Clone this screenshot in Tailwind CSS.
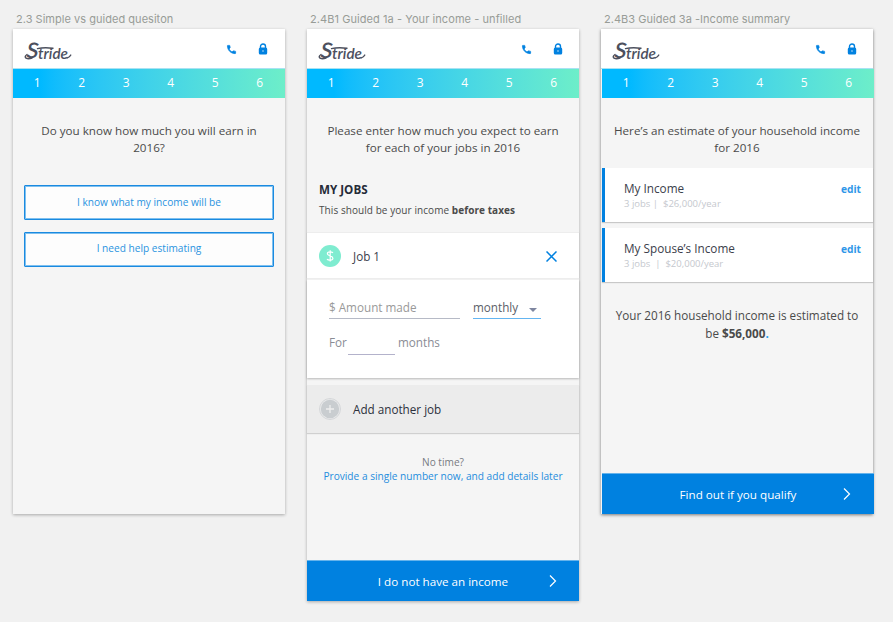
<!DOCTYPE html>
<html lang="en">
<head>
<meta charset="utf-8">
<title>Stride income flow</title>
<script src="https://cdn.jsdelivr.net/npm/@tailwindcss/browser@4"></script>
</head>
<body class="w-[893px] h-[622px] overflow-hidden bg-[#f1f1f1] font-['Open_Sans',sans-serif] text-[#4a4a4a]">
<svg class="hidden">
  <symbol id="phone" viewBox="0 0 24 24"><path fill="#0081e0" stroke="#0081e0" stroke-width="1.500" d="M6.600 10.800c1.500 2.800 3.800 5.100 6.600 6.600l2.200-2.200c.3-.3.7-.4 1-.2 1.100.4 2.300.6 3.600.6.600 0 1 .4 1 1V20c0 .6-.4 1-1 1C10.600 21 3 13.400 3 4c0-.6.4-1 1-1h3.500c.6 0 1 .4 1 1 0 1.200.2 2.400.6 3.600.1.300 0 .7-.2 1z"/></symbol>
  <symbol id="lock" viewBox="0 0 10 12"><path d="M2.500 5V3.500a2.500 2.500 0 0 1 5 0V5" fill="none" stroke="#0081e0" stroke-width="1.400"/><rect x="0.800" y="4.600" width="8.400" height="6.900" rx="1.500" fill="#0081e0"/><circle cx="5" cy="8" r="0.900" fill="#7fc0ef"/></symbol>
  <symbol id="logo" viewBox="0 0 48 22">
    <g font-family="Lato,sans-serif" font-style="italic" font-weight="600" fill="#4c505e"><text x="2.500" y="18" font-size="21.500" textLength="12" lengthAdjust="spacingAndGlyphs" transform="rotate(3 8 12)">S</text><text x="14" y="18.500" font-size="16" textLength="30" lengthAdjust="spacingAndGlyphs">tride</text></g>
    <path d="M13.500 8.600Q20 7 29 8.200M3 14.500Q0 16.500 2 18.200Q4.500 19.400 8 18M43 18Q45.500 17.500 46.800 15" fill="none" stroke="#4c505e" stroke-width="1.400" stroke-linecap="round"/>
  </symbol>
  <symbol id="chev" viewBox="0 0 8 14"><path d="M1 1.500L6.500 7L1 12.500" fill="none" stroke="#fff" stroke-width="1.200"/></symbol>
</svg>
<main class="flex items-start pl-[13px] pt-3">

  <section class="w-[272px] mr-[22px]">
    <h2 class="h-[17px] pl-[3px] leading-[15px] font-[Inter] text-[11px] text-[#989c97] whitespace-nowrap tracking-[0.03px]"><span>2.3 Simple vs guided quesiton</span></h2>
    <div class="h-[485px] bg-[#f5f5f5] shadow-[0_1px_3px_rgba(0,0,0,0.3)]">
      <header class="h-10 bg-white border-b border-[#a8e2f3] flex items-center">
        <svg class="w-12 h-[22px] ml-[11px] mt-1"><use href="#logo"/></svg>
        <svg class="w-[11px] h-[11px] ml-[154px] mt-px"><use href="#phone"/></svg>
        <svg class="w-[10px] h-3 ml-[21px] mt-px"><use href="#lock"/></svg>
      </header>
      <nav class="h-[29px] pl-0.5 pr-[3px] bg-linear-to-r from-[#00b9ff] from-10% to-[#6deec9] grid grid-cols-6 text-center text-[12px] leading-[28px] text-white"><b class="font-normal">1</b><b class="font-normal">2</b><b class="font-normal">3</b><b class="font-normal">4</b><b class="font-normal">5</b><b class="font-normal">6</b></nav>
      <p class="mt-6 text-center text-[11.650px] leading-[17px] whitespace-nowrap"><span>Do you know how much you will earn in</span><br>2016?</p>
      <div class="mt-[29px] mx-[11px] grid gap-[12px] text-center text-[10.150px] leading-[33px] text-[#2a93e0]">
        <div class="h-[35px] border-[1.500px] outline-1 -outline-offset-2 outline-[#7fc0ef] border-[#1a8ae0] rounded-[1px] bg-[#fdfdfd]"><span>I know what my income will be</span></div>
        <div class="h-[35px] border-[1.500px] outline-1 -outline-offset-2 outline-[#7fc0ef] border-[#1a8ae0] rounded-[1px] bg-[#fdfdfd] leading-[31px]"><span>I need help estimating</span></div>
      </div>
    </div>
  </section>

  <section class="w-[272px] mr-[22px]">
    <h2 class="h-[17px] pl-[3px] leading-[15px] font-[Inter] text-[11px] text-[#989c97] whitespace-nowrap tracking-[0.070px]"><span>2.4B1 Guided 1a - Your income - unfilled</span></h2>
    <div class="h-[572px] bg-[#f5f5f5] shadow-[0_1px_3px_rgba(0,0,0,0.3)] flex flex-col">
      <header class="h-10 bg-white border-b border-[#a8e2f3] flex items-center">
        <svg class="w-12 h-[22px] ml-[11px] mt-1"><use href="#logo"/></svg>
        <svg class="w-[11px] h-[11px] ml-[155px] mt-px"><use href="#phone"/></svg>
        <svg class="w-[10px] h-3 ml-[21px] mt-px"><use href="#lock"/></svg>
      </header>
      <nav class="h-[29px] pl-0.5 pr-[3px] bg-linear-to-r from-[#00b9ff] from-10% to-[#6deec9] grid grid-cols-6 text-center text-[12px] leading-[28px] text-white"><b class="font-normal">1</b><b class="font-normal">2</b><b class="font-normal">3</b><b class="font-normal">4</b><b class="font-normal">5</b><b class="font-normal">6</b></nav>
      <p class="mt-6 text-center text-[11.650px] leading-[17px] whitespace-nowrap"><span>Please enter how much you expect to earn</span><br><span>for each of your jobs in 2016</span></p>
      <h3 class="mt-[26px] pl-3 h-[17px] text-[11.650px] leading-[16px] font-bold text-[#252b38]"><span>MY JOBS</span></h3>
      <p class="mt-[4px] pl-3 h-[30px] text-[10px] leading-[14px] tracking-[0.070px]"><span>This should be your income <b>before taxes</b></span></p>
      <div class="h-[45px] bg-white flex items-center shadow-[0_0_1px_rgba(0,0,0,0.2)]">
        <svg class="w-[22px] h-[22px] ml-3" viewBox="0 0 22 22"><circle cx="11" cy="11" r="11" fill="#7fecd0"/><path d="M14 7.800C13 6.800 8.400 6.200 8.400 8.700C8.400 11.200 13.900 10.500 13.900 13.200C13.900 15.600 9.500 15.600 8 14.200M11.200 5.200V16.600" fill="none" stroke="#fff" stroke-width="1.200"/></svg>
        <div class="ml-3 mt-0.5 w-[193px] text-[11.700px] text-[#3b404b]"><span>Job 1</span></div>
        <svg class="w-[11px] h-[11px] mt-px" viewBox="0 0 11 11"><path d="M0.500 0.500L10.500 10.500M10.500 0.500L0.500 10.500" stroke="#0081e0" stroke-width="1.500"/></svg>
      </div>
      <div class="mt-0.5 h-[98px] bg-white pl-[22px] pt-[19px] text-[11.700px] leading-[16px] text-[#8a8c95] shadow-[0_1px_2px_rgba(0,0,0,0.25)]">
        <div class="flex gap-[13px]">
          <div class="w-[131px] h-5 border-b border-[#b6bac6] text-[#999999]"><span>$ Amount made</span></div>
          <div class="w-[68px] h-5 bg-[#64b5f1] pb-px"><div class="h-[19px] bg-white flex items-start justify-between text-[#5b6068]"><span>monthly</span><svg class="w-2 h-1 mr-1 mt-[9px]" viewBox="0 0 8 4"><path d="M0 0H8L4 4Z" fill="#7e86a0"/></svg></div></div>
        </div>
        <div class="mt-[15px] flex"><span class="w-[19px]">For</span><i class="w-[47px] h-[21px] border-b border-[#b3b2cb] mr-[3px]"></i><span>months</span></div>
      </div>
      <div class="mt-[7px] h-12 bg-[#ececec] flex items-center shadow-[0_1px_1px_rgba(0,0,0,0.15)]">
        <svg class="w-[22px] h-[22px] ml-3" viewBox="0 0 22 22"><circle cx="11" cy="11" r="10.500" fill="#e9eaeb" stroke="#d5d7d9"/><circle cx="11" cy="11" r="9.200" fill="#c9cdd0"/><path d="M11 7V15M7 11H15" stroke="#eee" stroke-width="1.300"/></svg>
        <div class="ml-3 mt-px text-[11.700px] text-[#2c313c]"><span>Add another job</span></div>
      </div>
      <p class="mt-[22px] text-center text-[10.150px] leading-[14px] text-[#777a82] whitespace-nowrap"><span>No time?</span><br><span class="text-[#1f8ddd]">Provide a single number now, and add details later</span></p>
      <div class="mt-auto h-[41px] bg-[#0081e0] border-t border-[#66b3eb] flex items-center text-[11.650px] text-white">
        <div class="w-[242px] pl-[30px] mt-px text-center"><span>I do not have an income</span></div>
        <svg class="w-2 h-[14px]"><use href="#chev"/></svg>
      </div>
    </div>
  </section>

  <section class="w-[272px]">
    <h2 class="h-[17px] pl-[3px] leading-[15px] font-[Inter] text-[11px] text-[#989c97] whitespace-nowrap tracking-[0.030px]"><span>2.4B3 Guided 3a -Income summary</span></h2>
    <div class="h-[485px] bg-[#f5f5f5] shadow-[0_1px_3px_rgba(0,0,0,0.5)] flex flex-col">
      <header class="h-10 bg-white border-b border-[#a8e2f3] flex items-center">
        <svg class="w-12 h-[22px] ml-[11px] mt-1"><use href="#logo"/></svg>
        <svg class="w-[11px] h-[11px] ml-[155px] mt-px"><use href="#phone"/></svg>
        <svg class="w-[10px] h-3 ml-[21px] mt-px"><use href="#lock"/></svg>
      </header>
      <nav class="h-[29px] ml-px -mr-px pl-0.5 pr-[3px] bg-linear-to-r from-[#00b9ff] from-10% to-[#6deec9] grid grid-cols-6 text-center text-[12px] leading-[28px] text-white"><b class="font-normal">1</b><b class="font-normal">2</b><b class="font-normal">3</b><b class="font-normal">4</b><b class="font-normal">5</b><b class="font-normal">6</b></nav>
      <p class="mt-6 text-center text-[11.650px] leading-[17px] whitespace-nowrap"><span>Here’s an estimate of your household income</span><br><span>for 2016</span></p>
      <div class="mt-3 ml-px grid gap-1.5">
        <div class="h-[54px] bg-white border-l-3 border-[#0081e0] pl-[19px] pr-3 pt-3 flex justify-between shadow-[0_1px_1px_rgba(0,0,0,0.18)]">
          <div><div class="text-[11.750px] leading-[16px] h-[17px] text-[#3b404b]"><span>My Income</span></div><div class="text-[9.500px] leading-[13px] text-[#c5c8ce] whitespace-pre"><span>3 jobs |  $26,000/year</span></div></div>
          <div class="text-[10.200px] leading-[19px] font-bold text-[#2f97e8]"><span>edit</span></div>
        </div>
        <div class="h-[54px] bg-white border-l-3 border-[#0081e0] pl-[19px] pr-3 pt-3 flex justify-between shadow-[0_1px_1px_rgba(0,0,0,0.18)]">
          <div><div class="text-[11.750px] leading-[16px] h-[17px] text-[#3b404b]"><span>My Spouse’s Income</span></div><div class="text-[9.500px] leading-[13px] text-[#c5c8ce] whitespace-pre"><span>3 jobs  |  $20,000/year</span></div></div>
          <div class="text-[10.200px] leading-[19px] font-bold text-[#2f97e8]"><span>edit</span></div>
        </div>
      </div>
      <p class="mt-[24px] text-center text-[11.700px] leading-[18px] whitespace-nowrap"><span>Your 2016 household income is estimated to</span><br><span>be <b>$56,000</b></span><b class="text-[#1f9df0]">.</b></p>
      <div class="mt-auto ml-px -mr-px h-[41px] bg-[#0081e0] border-t border-[#66b3eb] flex items-center text-[11.650px] text-white">
        <div class="w-[242px] pl-[30px] mt-px text-center"><span>Find out if you qualify</span></div>
        <svg class="w-2 h-[14px] -ml-px"><use href="#chev"/></svg>
      </div>
    </div>
  </section>
</main>
</body>
</html>
